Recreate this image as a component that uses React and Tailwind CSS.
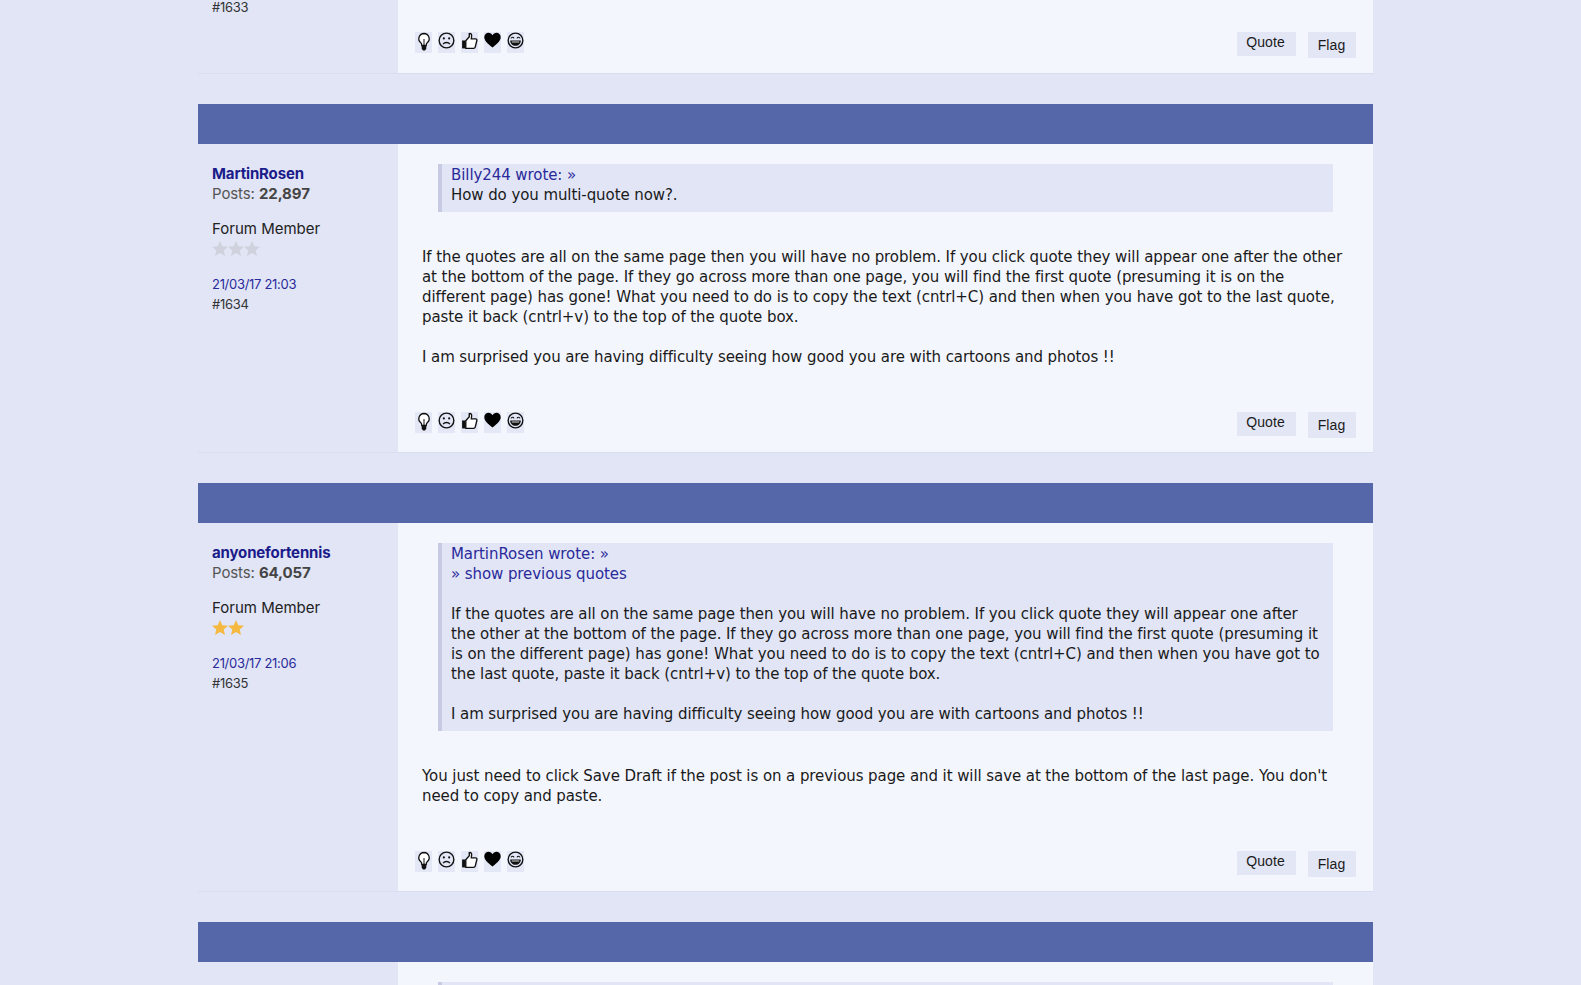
import React from 'react'

function Bulb() {
  return (
    <svg width="16" height="20" viewBox="0 0 16 20">
      <path d="M8 1.500a5.200 5.200 0 0 0-3.400 9.100c1 .9 1.200 1.700 1.200 2.900h4.400c0-1.200.2-2 1.200-2.900A5.200 5.200 0 0 0 8 1.500z" fill="#fff" stroke="#111" strokeWidth="1.300" />
      <path d="M8 7v6" stroke="#111" strokeWidth="1" />
      <path d="M5.700 13h4.600v3.800L9 18.500H7l-1.300-1.700z" fill="#111" />
    </svg>
  )
}

function Frown() {
  return (
    <svg width="17" height="17" viewBox="0 0 16 16" fill="none">
      <circle cx="8" cy="8" r="6.900" stroke="#111" strokeWidth="1.300" />
      <circle cx="5.500" cy="6" r="1" fill="#111" />
      <circle cx="10.500" cy="6" r="1" fill="#111" />
      <path d="M4.800 11.500c1.600-2.200 4.800-2.200 6.400 0" stroke="#111" strokeWidth="1.300" />
    </svg>
  )
}

function Thumb() {
  return (
    <svg width="17" height="18" viewBox="0 0 16 17">
      <path d="M1 8h3.500v7.500H1z" fill="#111" />
      <path d="M4.500 8.200 7.800 4.500V1.500c1.500-.6 2.400.8 2.200 2.300L9.700 6.500h4c1 0 1.500.9 1.200 1.800l-1.500 6c-.2.800-.8 1.200-1.600 1.200H4.500z" fill="#fff" stroke="#111" strokeWidth="1.300" />
    </svg>
  )
}

function Heart() {
  return (
    <svg width="18" height="16" viewBox="0 0 17 16">
      <path d="M8.500 15.500C3 11 .3 8.500.3 5.200.3 2.500 2.400.8 4.500.8c1.700 0 3.200.9 4 2.500.8-1.600 2.300-2.500 4-2.500 2.100 0 4.200 1.700 4.200 4.400 0 3.300-2.700 5.800-8.200 10.300z" fill="#000" />
    </svg>
  )
}

function Laugh() {
  return (
    <svg width="17" height="17" viewBox="0 0 16 16" fill="none">
      <circle cx="8" cy="8" r="6.900" stroke="#111" strokeWidth="1.300" />
      <path d="M3.800 6c.5-1.400 2.200-1.400 2.800 0M9.400 6c.6-1.400 2.300-1.400 2.800 0" stroke="#111" strokeWidth="1.100" />
      <path d="M3 8h10c0 3-2.200 5-5 5s-5-2-5-5z" fill="#111" />
      <path d="M4.500 9h7v.8h-7z" fill="#fff" />
    </svg>
  )
}

function Star({ color }) {
  return (
    <svg width="16" height="15" viewBox="0 0 16 15">
      <path d="M8 0l2.300 5.200 5.700.5-4.300 3.700 1.300 5.600L8 12l-5 3 1.300-5.600L0 5.700l5.700-.5z" fill={color} />
    </svg>
  )
}

function Footer() {
  const icons = [<Bulb />, <Frown />, <Thumb />, <Heart />, <Laugh />]
  return (
    <div className="flex justify-between items-start pr-[17px] pl-[17px]">
      <div className="flex gap-[6px]">
        {icons.map((icon, i) => (
          <div key={i} className="w-[17px] h-[21px] bg-[#e3e7f6] flex justify-center overflow-visible">{icon}</div>
        ))}
      </div>
      <div className="flex gap-3 items-start font-['Liberation_Sans',sans-serif] text-[14px] tracking-[0.1px] text-[#1a1a1a]">
        <div className="w-[59px] h-[24px] bg-[#e3e6f5] text-center leading-[21px] pr-[2px]">Quote</div>
        <div className="w-[48px] h-[26px] bg-[#e3e6f5] text-center leading-[27px] pr-[1px]">Flag</div>
      </div>
    </div>
  )
}

function Sidebar({ name, posts, starColor, stars, date, num }) {
  return (
    <div className="w-[200px] shrink-0 pl-[14px] pt-[20px] font-['Inter',sans-serif]">
      <div className="text-[15px] leading-[20px] font-bold text-[#1b1b8a] tracking-[-0.15px]">{name}</div>
      <div className="text-[15px] leading-[20px] text-[#555] tracking-[-0.1px]">Posts: <b className="text-[#444]">{posts}</b></div>
      <div className="mt-[15px] text-[15px] leading-[20px] text-[#222]">Forum Member</div>
      <div className="flex mt-[2px] h-[16px]">
        {Array.from({ length: stars }).map((_, i) => <Star key={i} color={starColor} />)}
      </div>
      <div className="mt-[17px] text-[13px] leading-[20px] text-[#2a2a9a] tracking-[-0.3px]">{date}</div>
      <div className="text-[13px] leading-[20px] text-[#333] tracking-[-0.3px]">{num}</div>
    </div>
  )
}

function Post({ sidebar, children }) {
  return (
    <div>
      <div className="h-[40px] bg-[#5567a9]" />
      <div className="flex bg-[#e1e5f6] border-b border-[#d9ddf0]">
        <Sidebar {...sidebar} />
        <div className="flex-1 bg-[#f4f6fd] pt-[20px] pb-[14px]">
          {children}
        </div>
      </div>
    </div>
  )
}

function Quote({ children }) {
  return (
    <div className="ml-10 mr-10 border-l-4 border-[#c6cbe3] bg-[#e1e5f6] pl-[9px] pr-2 pt-[1px] pb-[7px] text-[15px] tracking-[-0.08px] leading-[20px] text-[#1a1a1a]">
      {children}
    </div>
  )
}

export default function App() {
  return (
    <div className="h-[985px] overflow-hidden bg-[#e1e5f6] font-['DejaVu_Sans',sans-serif]">
      <div className="ml-[198px] w-[1175px]">
        {/* post cut off by the top of the page */}
        <div className="flex h-[74px] bg-[#e1e5f6] border-b border-[#d9ddf0]">
          <div className="w-[200px] shrink-0 pl-[14px] font-['Inter',sans-serif] text-[13px] leading-[20px] text-[#333] tracking-[-0.3px] -mt-[3px]">#1633</div>
          <div className="flex-1 bg-[#f4f6fd] pt-[32px]">
            <Footer />
          </div>
        </div>

        <div className="mt-[30px]">
          <Post sidebar={{ name: 'MartinRosen', posts: '22,897', starColor: '#cfd2dc', stars: 3, date: '21/03/17 21:03', num: '#1634' }}>
            <Quote>
              <div className="text-[#2a2a9a]">Billy244 wrote: »</div>
              <div>How do you multi-quote now?.</div>
            </Quote>
            <div className="mt-[35px] pl-6 pr-[26px] text-[15px] tracking-[-0.08px] leading-[20px] text-[#1a1a1a]">
              <p>If the quotes are all on the same page then you will have no problem. If you click quote they will appear one after the other at the bottom of the page. If they go across more than one page, you will find the first quote (presuming it is on the different page) has gone! What you need to do is to copy the text (cntrl+C) and then when you have got to the last quote, paste it back (cntrl+v) to the top of the quote box.</p>
              <p className="mt-5">I am surprised you are having difficulty seeing how good you are with cartoons and photos !!</p>
            </div>
            <div className="mt-[45px]"><Footer /></div>
          </Post>
        </div>

        <div className="mt-[30px]">
          <Post sidebar={{ name: 'anyonefortennis', posts: '64,057', starColor: '#f5b942', stars: 2, date: '21/03/17 21:06', num: '#1635' }}>
            <Quote>
              <div className="text-[#2a2a9a]">MartinRosen wrote: »</div>
              <div className="text-[#2a2a9a]">» show previous quotes</div>
              <p className="mt-5">If the quotes are all on the same page then you will have no problem. If you click quote they will appear one after the other at the bottom of the page. If they go across more than one page, you will find the first quote (presuming it is on the different page) has gone! What you need to do is to copy the text (cntrl+C) and then when you have got to the last quote, paste it back (cntrl+v) to the top of the quote box.</p>
              <p className="mt-5">I am surprised you are having difficulty seeing how good you are with cartoons and photos !!</p>
            </Quote>
            <div className="mt-[35px] pl-6 pr-[26px] text-[15px] tracking-[-0.08px] leading-[20px] text-[#1a1a1a]">
              <p>You just need to click Save Draft if the post is on a previous page and it will save at the bottom of the last page. You don't need to copy and paste.</p>
            </div>
            <div className="mt-[45px]"><Footer /></div>
          </Post>
        </div>

        <div className="mt-[30px]">
          <div className="h-[40px] bg-[#5567a9]" />
          <div className="flex h-[60px]">
            <div className="w-[200px] shrink-0 bg-[#e1e5f6]" />
            <div className="flex-1 bg-[#f4f6fd] pt-[20px]">
              <div className="ml-10 mr-10 border-l-4 border-[#c6cbe3] bg-[#e1e5f6] h-[40px]" />
            </div>
          </div>
        </div>
      </div>
    </div>
  )
}
